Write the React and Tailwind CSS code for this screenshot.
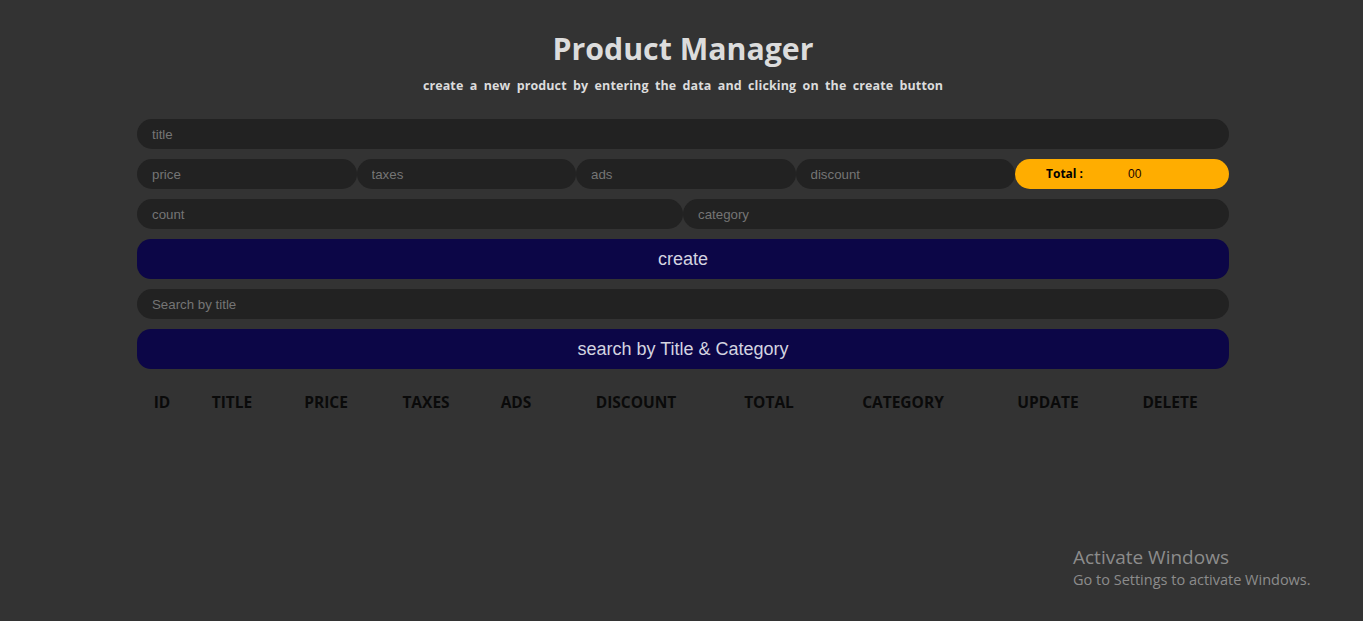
import React from 'react';

const columns = [
  { label: 'ID', w: 'w-[50px]' },
  { label: 'TITLE', w: 'w-[90px]' },
  { label: 'PRICE', w: 'w-[98px]' },
  { label: 'TAXES', w: 'w-[102px]' },
  { label: 'ADS', w: 'w-[78px]' },
  { label: 'DISCOUNT', w: 'w-[162px]' },
  { label: 'TOTAL', w: 'w-[104px]' },
  { label: 'CATEGORY', w: 'w-[164px]' },
  { label: 'UPDATE', w: 'w-[126px]' },
  { label: 'DELETE', w: 'w-[118px]' },
];

const inputClass =
  "h-[30px] w-full min-w-0 rounded-[15px] bg-[#222222] px-[15px] text-[13.3px] text-[#dddddd] placeholder:text-[#757575] outline-none font-['Liberation_Sans',Arial,sans-serif]";

const buttonClass =
  "h-[40px] w-full rounded-[14px] bg-[#0c0647] text-[18px] text-[#d4d4e0] font-['Liberation_Sans',Arial,sans-serif]";

export default function App() {
  return (
    <div className="relative min-h-[621px] w-full bg-[#333333] font-['Open_Sans',sans-serif]">
      <div className="ml-[137px] w-[1092px] pt-[29px]">
        <div className="text-center">
          <h1 className="text-[30.3px] font-bold leading-[40px] text-[#dcdcdc]">Product Manager</h1>
          <p className="mt-[9px] text-[12.5px] font-bold leading-[16px] tracking-[0.1px] text-[#dcdcdc] [word-spacing:3px]">
            create a new product by entering the data and clicking on the create button
          </p>
        </div>

        <div className="mt-[25px] flex flex-col gap-[10px]">
          <input className={inputClass} placeholder="title" />

          <div className="flex">
            <input className={inputClass} placeholder="price" />
            <input className={inputClass} placeholder="taxes" />
            <input className={inputClass} placeholder="ads" />
            <input className={inputClass} placeholder="discount" />
            <div className="flex h-[30px] w-full shrink-0 basis-[214px] items-center rounded-[15px] bg-[#ffad00] pl-[31px]">
              <span className="w-[82px] text-[12px] font-bold text-black">Total :</span>
              <span className="text-[12px] text-[#1a0500] font-['Liberation_Sans',Arial,sans-serif]">00</span>
            </div>
          </div>

          <div className="flex">
            <input className={inputClass} placeholder="count" />
            <input className={inputClass} placeholder="category" />
          </div>

          <button className={buttonClass}>create</button>

          <input className={inputClass} placeholder="Search by title" />

          <button className={buttonClass}>search by Title &amp; Category</button>
        </div>

        <table className="mt-[23px] w-full table-fixed">
          <thead>
            <tr>
              {columns.map((col) => (
                <th
                  key={col.label}
                  className={`${col.w} text-center text-[15.5px] font-bold leading-[20px] text-[#0a0a0a]`}
                >
                  {col.label}
                </th>
              ))}
            </tr>
          </thead>
        </table>
      </div>

      <div className="absolute left-[1073px] top-[545px] text-[#8c8c8c] font-['Open_Sans',sans-serif]">
        <div className="text-[19px] leading-[25px]">Activate Windows</div>
        <div className="text-[14.5px] leading-[20px]">Go to Settings to activate Windows.</div>
      </div>
    </div>
  );
}
